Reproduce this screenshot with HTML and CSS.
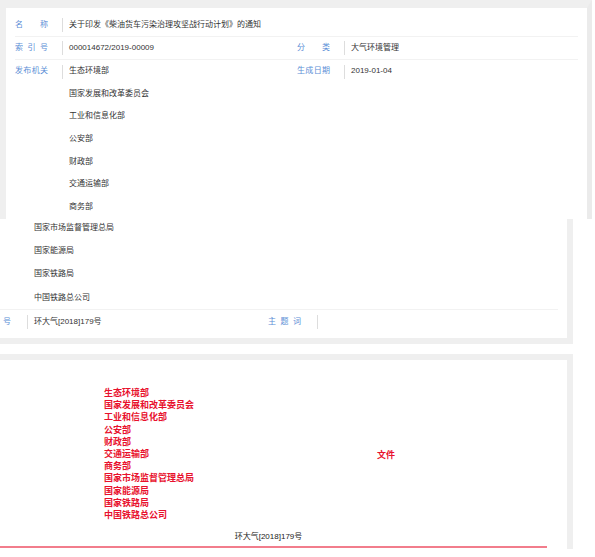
FILE: index.html
```html
<!DOCTYPE html>
<html lang="zh-CN">
<head>
<meta charset="utf-8">
<title>关于印发《柴油货车污染治理攻坚战行动计划》的通知</title>
<link rel="stylesheet" href="styles.css">
</head>
<body>
<div class="info-top">
  <div class="row row-first">
    <div class="lab"><span class="lt"><i>名</i><i>称</i></span></div>
    <div class="val val-wide">关于印发《柴油货车污染治理攻坚战行动计划》的通知</div>
  </div>
  <div class="row row-second">
    <div class="lab"><span class="lt"><i>索</i><i>引</i><i>号</i></span></div>
    <div class="val">000014672/2019-00009</div>
    <div class="lab"><span class="lt"><i>分</i><i>类</i></span></div>
    <div class="val">大气环境管理</div>
  </div>
  <div class="row row-multi">
    <div class="lab"><span class="lt"><i>发</i><i>布</i><i>机</i><i>关</i></span></div>
    <div class="val">
      <div>生态环境部</div>
      <div>国家发展和改革委员会</div>
      <div>工业和信息化部</div>
      <div>公安部</div>
      <div>财政部</div>
      <div>交通运输部</div>
      <div>商务部</div>
    </div>
    <div class="lab"><span class="lt"><i>生</i><i>成</i><i>日</i><i>期</i></span></div>
    <div class="val">2019-01-04</div>
  </div>
</div>

<div class="info-bottom">
  <div class="row2 row2-list">
    <div></div>
    <div class="val2 list2">
      <div>国家市场监督管理总局</div>
      <div>国家能源局</div>
      <div>国家铁路局</div>
      <div>中国铁路总公司</div>
    </div>
  </div>
  <div class="row2 row2-last">
    <div class="lab"><span class="lt"><i>文</i><i>号</i></span></div>
    <div class="val2">环大气[2018]179号</div>
    <div class="lab"><span class="lt"><i>主</i><i>题</i><i>词</i></span></div>
    <div class="val2"></div>
  </div>
</div>

<div class="doc">
  <div class="head">
    <div class="orgs">
      <div>生态环境部</div>
      <div>国家发展和改革委员会</div>
      <div>工业和信息化部</div>
      <div>公安部</div>
      <div>财政部</div>
      <div>交通运输部</div>
      <div>商务部</div>
      <div>国家市场监督管理总局</div>
      <div>国家能源局</div>
      <div>国家铁路局</div>
      <div>中国铁路总公司</div>
    </div>
    <div class="wj">文件</div>
  </div>
  <div class="docno">环大气[2018]179号</div>
  <div class="redline"></div>
</div>
</body>
</html>
```

FILE: styles.css
```css
* { box-sizing: border-box; }
html, body {
  margin: 0;
  padding: 0;
  background: #ffffff;
}
body {
  font-family: "Liberation Sans", "Noto Sans CJK SC", sans-serif;
  font-size: 8px;
  color: #333333;
}
i { font-style: normal; }

/* top card */
.info-top {
  width: 592px;
  background: #ffffff;
  border-top: 8px solid #efefef;
  border-left: 6px solid #efefef;
  border-right: 5px solid #ebebeb;
  padding: 6px 9px 0 9px;
}
.row {
  display: grid;
  grid-template-columns: 48px 233px 49px 1fr;
  align-items: start;
  line-height: 22px;
  border-bottom: 1px solid #f2f2f2;
}
.row .lab { height: 22px; }
.row-multi {
  line-height: 22.67px;
  border-bottom: none;
}
.row-multi .lab { height: 23px; }
.val-wide { grid-column: 2 / 5; }
.val { padding-left: 6px; white-space: nowrap; }

.lab {
  display: flex;
  justify-content: flex-end;
  align-items: center;
  height: 23px;
  color: #5b8ed6;
}
.lab::after {
  content: "";
  flex: 0 0 1px;
  width: 1px;
  height: 14px;
  background: #dddddd;
}
.lt {
  flex: 0 0 33px;
  width: 33px;
  margin-right: 14px;
  display: flex;
  justify-content: space-between;
}

/* shifted continuation */
.info-bottom {
  width: 573px;
  background: #ffffff;
  border-right: 6px solid #efefef;
  border-bottom: 6px solid #efefef;
  padding: 0 9px 4px 0;
}
.row2 {
  display: grid;
  grid-template-columns: 28px 240px 50px 1fr;
  align-items: start;
}
.row2-list {
  border-bottom: 1px solid #f2f2f2;
}
.list2 {
  margin-top: -3px;
  line-height: 23.3px;
}
.row2-last { line-height: 24px; }
.row2-last .lab { height: 24px; }
.row2-last .lab .lt { margin-right: 16px; }
.val2 { padding-left: 6px; white-space: nowrap; }

/* document card */
.doc {
  width: 573px;
  margin-top: 10px;
  background: #ffffff;
  border-top: 6px solid #efefef;
  border-right: 6px solid #efefef;
  padding: 27px 20px 1px 0;
}
.head {
  display: flex;
  align-items: center;
}
.orgs {
  width: 377px;
  padding-left: 104px;
  font-family: "Noto Sans CJK SC", sans-serif;
  font-weight: bold;
  font-size: 9px;
  line-height: 12.2px;
  color: #e8112d;
}
.wj {
  font-family: "Noto Sans CJK SC", sans-serif;
  font-weight: bold;
  font-size: 9px;
  color: #e8112d;
}
.docno {
  margin-top: 10px;
  padding-right: 10px;
  text-align: center;
  line-height: 12px;
  color: #222222;
}
.redline {
  margin-top: 3px;
  height: 2px;
  background: #f27d8c;
}
```
